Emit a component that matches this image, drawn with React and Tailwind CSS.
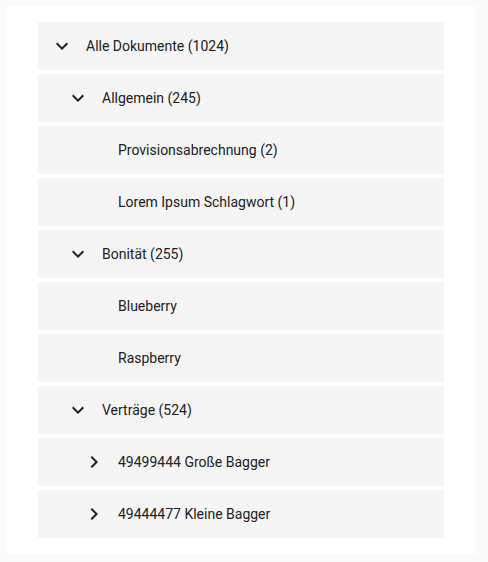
import React from "react";

const tree = [
  { label: "Alle Dokumente (1024)", level: 0, icon: "down" },
  { label: "Allgemein (245)", level: 1, icon: "down" },
  { label: "Provisionsabrechnung (2)", level: 2 },
  { label: "Lorem Ipsum Schlagwort (1)", level: 2 },
  { label: "Bonität (255)", level: 1, icon: "down" },
  { label: "Blueberry", level: 2 },
  { label: "Raspberry", level: 2 },
  { label: "Verträge (524)", level: 1, icon: "down" },
  { label: "49499444 Große Bagger", level: 2, icon: "right" },
  { label: "49444477 Kleine Bagger", level: 2, icon: "right" },
];

const indent = ["pl-3", "pl-7", "pl-11"];

function Chevron({ dir }) {
  return (
    <svg viewBox="0 0 24 24" className="h-6 w-6 fill-[#212121]">
      {dir === "down" ? (
        <path d="M16.59 8.59L12 13.17 7.41 8.59 6 10l6 6 6-6z" />
      ) : (
        <path d="M10 6L8.59 7.41 13.17 12l-4.58 4.59L10 18l6-6z" />
      )}
    </svg>
  );
}

export default function App() {
  return (
    <div
      className="min-h-[562px] w-[488px] bg-[#fafafa] p-1.5"
      style={{ fontFamily: "Roboto, 'Liberation Sans', sans-serif" }}
    >
      <div className="flex w-[470px] flex-col gap-1 bg-white px-8 py-4">
        {tree.map((node) => (
          <div
            key={node.label}
            className={`flex h-12 items-center gap-3 bg-[#f5f5f5] ${indent[node.level]}`}
          >
            <div className="h-6 w-6 shrink-0">
              {node.icon && <Chevron dir={node.icon} />}
            </div>
            <span className="text-sm text-[#212121]">{node.label}</span>
          </div>
        ))}
      </div>
    </div>
  );
}
